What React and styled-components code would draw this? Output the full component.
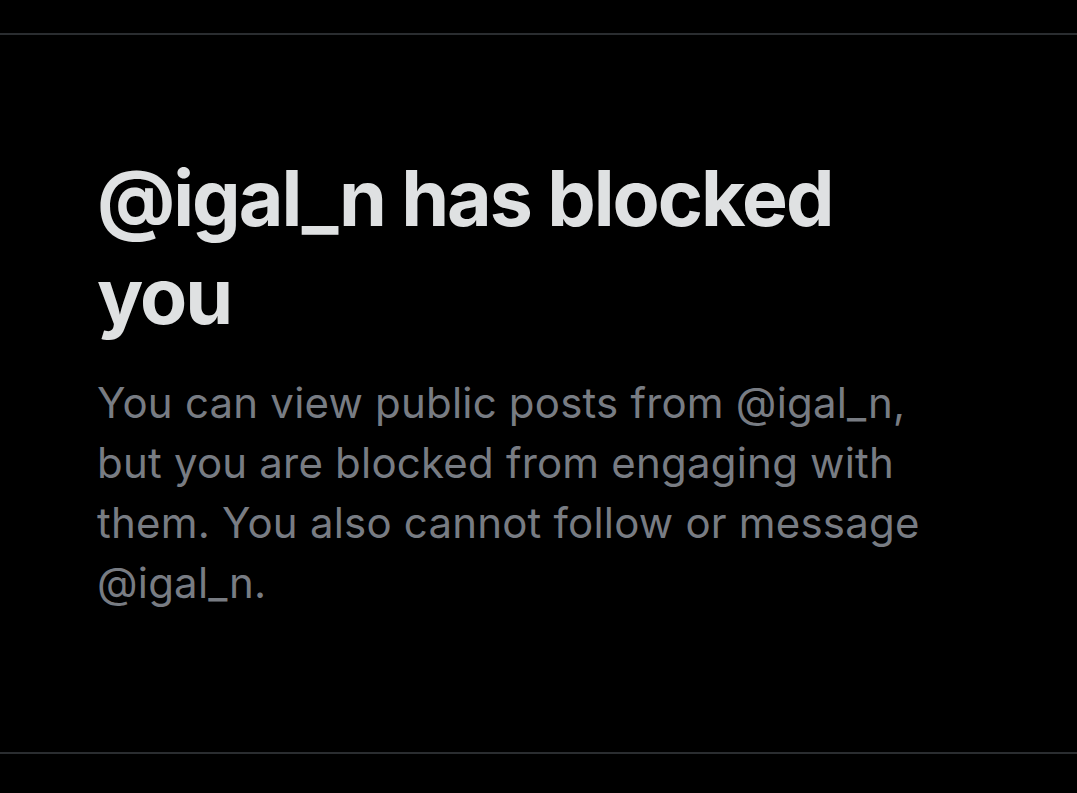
import React from "react";
import styled, { createGlobalStyle } from "styled-components";

const GlobalStyle = createGlobalStyle`
  html, body {
    margin: 0;
    padding: 0;
    background: #000000;
  }
  body {
    font-family: Inter, "Noto Sans", sans-serif;
    -webkit-font-smoothing: antialiased;
  }
`;

const Page = styled.div`
  background: #000000;
  min-height: 793px;
  padding-top: 33px;
`;

const EmptyState = styled.section`
  border-top: 2px solid #2a2d30;
  border-bottom: 2px solid #2a2d30;
  padding: 114px 0 139px 97px;
`;

const Content = styled.div`
  max-width: 860px;
`;

const Title = styled.h1`
  margin: 0;
  font-size: 77px;
  line-height: 98px;
  font-weight: 700;
  letter-spacing: -2px;
  color: #dfe1e2;
`;

const Message = styled.p`
  margin: 28px 0 0;
  font-size: 42px;
  line-height: 60px;
  font-weight: 400;
  letter-spacing: 0.2px;
  color: #787c83;
`;

const App = () => {
  const handle = "@igal_n";
  return (
    <>
      <GlobalStyle />
      <Page>
        <EmptyState>
          <Content>
            <Title>{`${handle} has blocked you`}</Title>
            <Message>
              {`You can view public posts from ${handle}, but you are blocked from engaging with them. You also cannot follow or message ${handle}.`}
            </Message>
          </Content>
        </EmptyState>
      </Page>
    </>
  );
};

export default App;
